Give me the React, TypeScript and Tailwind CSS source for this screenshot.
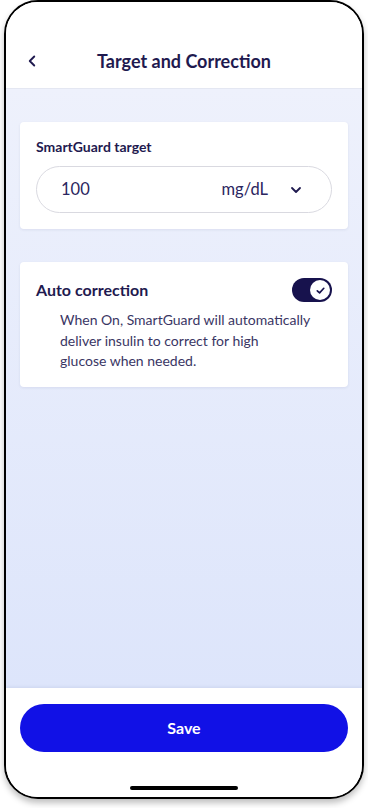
import { ChevronLeft, ChevronDown } from "lucide-react";

const font = { fontFamily: "Lato, 'Noto Sans', sans-serif" };

export default function App() {
  return (
    <div className="h-[808px] w-[368px] bg-white pl-1" style={font}>
      <div className="flex h-[799px] w-[360px] flex-col overflow-hidden rounded-[34px] border-2 border-black bg-white shadow-[0_4px_6px_rgba(0,0,0,0.25)]">
        <header className="h-[87px] shrink-0 border-b border-[#e4e7f2] bg-white pt-[44px]">
          <div className="relative flex h-[30px] items-center justify-center">
            <button
              type="button"
              aria-label="Back"
              className="absolute left-[17px] top-1/2 -translate-y-1/2 text-[#1f1a4f]"
            >
              <ChevronLeft className="h-[18px] w-[18px]" strokeWidth={2.5} />
            </button>
            <h1 className="text-[18px] font-bold text-[#1f1a4f]">
              Target and Correction
            </h1>
          </div>
        </header>

        <main className="flex flex-1 flex-col gap-[33px] bg-gradient-to-b from-[#eef1fc] to-[#dde5fb] px-[14px] pt-[33px]">
          <section className="rounded-[4px] bg-white px-4 pb-4 pt-[16px] shadow-[0_1px_3px_rgba(30,40,90,0.08)]">
            <h2 className="text-[14px] font-bold leading-[18px] text-[#1f1a4f]">
              SmartGuard target
            </h2>
            <div className="mt-[10px] flex h-[47px] items-center rounded-full border border-[#d9d9e0] pl-6 pr-[27px] text-[16.5px] text-[#2b2660]">
              <span className="flex-1">100</span>
              <span className="mr-[20px]">mg/dL</span>
              <ChevronDown className="h-[16px] w-[16px] text-[#1f1a4f]" strokeWidth={2.75} />
            </div>
          </section>

          <section className="rounded-[4px] bg-white px-4 pb-[15px] pt-4 shadow-[0_1px_3px_rgba(30,40,90,0.08)]">
            <div className="flex items-center justify-between">
              <h2 className="text-[16px] font-bold text-[#1f1a4f]">Auto correction</h2>
              <div className="flex h-[24px] w-[40px] items-center justify-end rounded-full bg-[#17124d] pr-[2px]">
                <div className="flex h-[20px] w-[20px] items-center justify-center rounded-full bg-white">
                  <svg viewBox="0 0 12 12" className="h-[11px] w-[11px]" fill="none">
                    <path d="M2.5 6.3 L5 8.6 L9.6 3.6" stroke="#17124d" strokeWidth="1.8" strokeLinecap="round" strokeLinejoin="round" />
                  </svg>
                </div>
              </div>
            </div>
            <p className="ml-6 mt-[8px] text-[14px] leading-[20.5px] text-[#3a3664]">
              When On, SmartGuard will automatically
              <br />
              deliver insulin to correct for high
              <br />
              glucose when needed.
            </p>
          </section>
        </main>

        <footer className="shrink-0 bg-white px-[14px] pt-4 shadow-[0_-1px_3px_rgba(30,40,90,0.08)]">
          <button
            type="button"
            className="h-[48px] w-full rounded-full bg-[#1111e6] text-[16px] font-bold text-white"
          >
            Save
          </button>
          <div className="flex justify-center pb-[7px] pt-[34px]">
            <div className="h-[4px] w-[108px] rounded-full bg-black" />
          </div>
        </footer>
      </div>
    </div>
  );
}
